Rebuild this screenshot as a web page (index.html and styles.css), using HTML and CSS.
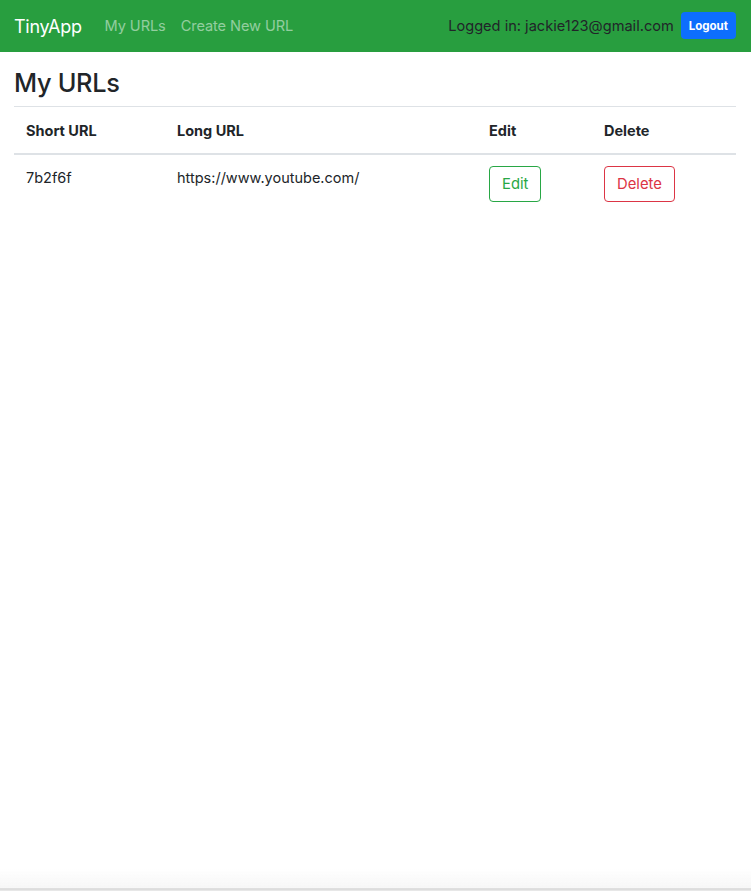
FILE: index.html
```html
<!DOCTYPE html>
<html lang="en">
<head>
    <meta charset="UTF-8">
    <meta name="viewport" content="width=device-width, initial-scale=1.0">
    <title>TinyApp</title>
    <link rel="stylesheet" href="styles.css">
</head>
<body>
    <nav class="navbar">
        <a class="brand" href="#">TinyApp</a>
        <div class="nav-links">
            <a href="#">My URLs</a>
            <a href="#">Create New URL</a>
        </div>
        <div class="nav-user">
            <span>Logged in: jackie123@gmail.com</span>
            <button class="btn-logout">Logout</button>
        </div>
    </nav>

    <main class="content">
        <h1>My URLs</h1>
        <table class="url-table">
            <thead>
                <tr>
                    <th class="col-short">Short URL</th>
                    <th class="col-long">Long URL</th>
                    <th class="col-edit">Edit</th>
                    <th class="col-delete">Delete</th>
                </tr>
            </thead>
            <tbody>
                <tr>
                    <td>7b2f6f</td>
                    <td>https://www.youtube.com/</td>
                    <td><button class="btn btn-edit">Edit</button></td>
                    <td><button class="btn btn-delete">Delete</button></td>
                </tr>
            </tbody>
        </table>
    </main>
</body>
</html>
```

FILE: styles.css
```css
body {
    margin: 0;
    font-family: "Inter", "Liberation Sans", sans-serif;
    font-size: 15px;
    color: #212529;
    background: #fff;
    min-height: 891px;
}

/* faint browser-like fade at the bottom edge */
body::after {
    content: "";
    position: fixed;
    left: 0;
    right: 0;
    bottom: 0;
    height: 22px;
    background: linear-gradient(to bottom, rgba(245, 245, 245, 0), #f7f7f7 85%, #d6d6d6 90%, #ececec);
}

.navbar {
    display: flex;
    align-items: center;
    height: 52px;
    padding: 0 15px 0 14px;
    background-color: #289e3f;
    box-sizing: border-box;
}

.brand {
    color: #fff;
    font-size: 18px;
    text-decoration: none;
    margin-right: 23px;
    letter-spacing: -0.3px;
}

.nav-links {
    display: flex;
    gap: 15px;
}

.nav-links a {
    color: rgba(255, 255, 255, 0.5);
    text-decoration: none;
    font-size: 14.6px;
    letter-spacing: -0.1px;
}

.nav-user {
    margin-left: auto;
    display: flex;
    align-items: center;
    gap: 7px;
    font-size: 14.6px;
    color: #212529;
}

.btn-logout {
    background-color: #0d6efd;
    color: #fff;
    border: none;
    border-radius: 4px;
    font-family: inherit;
    font-size: 11.5px;
    font-weight: 700;
    height: 27px;
    padding: 0 8px;
    margin-top: -1px;
}

.content {
    padding: 0 15px 0 14px;
}

h1 {
    font-size: 25.3px;
    font-weight: 500;
    margin: 16px 0 8px;
    line-height: 1.2;
    letter-spacing: -0.3px;
}

.url-table {
    width: 100%;
    border-collapse: collapse;
}

.url-table th,
.url-table td {
    text-align: left;
    padding: 12px 12px;
    border-top: 1px solid #dee2e6;
    vertical-align: top;
    font-size: 14.5px;
    line-height: 22px;
}

.url-table th {
    font-weight: 700;
    padding-top: 13px;
    padding-bottom: 11px;
    border-bottom: 2px solid #dee2e6;
}

.col-short { width: 127px; }
.col-long { width: 288px; }
.col-edit { width: 91px; }

.btn {
    background: #fff;
    font-family: inherit;
    font-size: 14.8px;
    border-radius: 4px;
    height: 36px;
    padding: 0 12px;
    line-height: 1;
    margin-top: -1px;
}

.btn-edit {
    color: #28a745;
    border: 1px solid #28a745;
}

.btn-delete {
    color: #dc3545;
    border: 1px solid #dc3545;
}
```
